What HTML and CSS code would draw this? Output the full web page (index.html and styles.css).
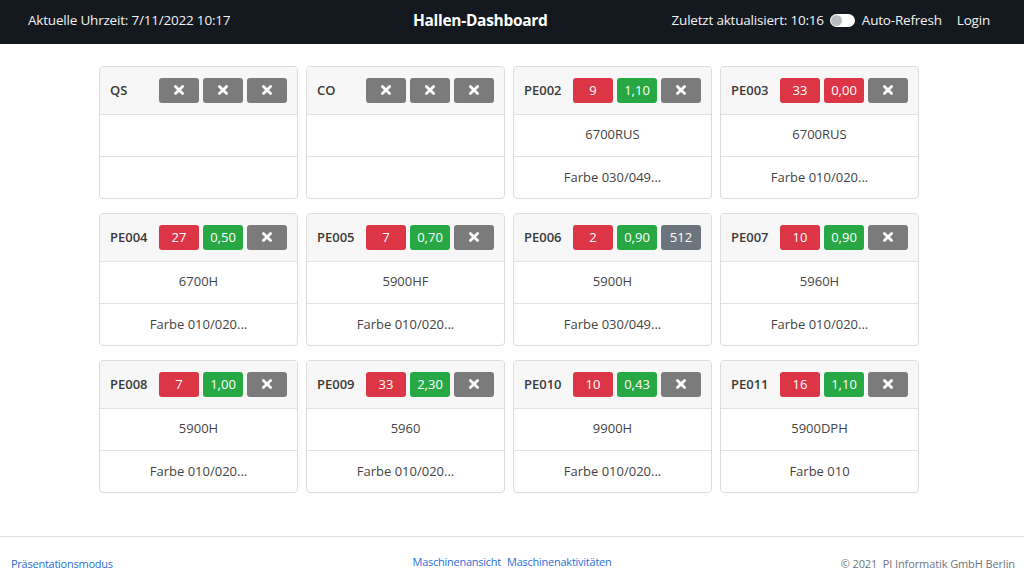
FILE: index.html
```html
<!DOCTYPE html>
<html lang="de">
<head>
<meta charset="utf-8">
<title>Hallen-Dashboard</title>
<link rel="stylesheet" href="styles.css">
</head>
<body>
<header class="navbar">
  <div class="nav-left">Aktuelle Uhrzeit: 7/11/2022 10:17</div>
  <div class="nav-title">Hallen-Dashboard</div>
  <div class="nav-right">
    <span>Zuletzt aktualisiert: 10:16</span>
    <span class="toggle"><span class="knob"></span></span>
    <span>Auto-Refresh</span>
    <span class="login">Login</span>
  </div>
</header>

<main class="main">
  <div class="grid">
    <div class="card">
      <div class="card-head"><span class="name">QS</span><span class="badges"><span class="b gray"><svg class="x" viewBox="0 0 10 10"><path d="M2 2L8 8M8 2L2 8"/></svg></span><span class="b gray"><svg class="x" viewBox="0 0 10 10"><path d="M2 2L8 8M8 2L2 8"/></svg></span><span class="b gray"><svg class="x" viewBox="0 0 10 10"><path d="M2 2L8 8M8 2L2 8"/></svg></span></span></div>
      <div class="row"></div>
      <div class="row last"></div>
    </div>
    <div class="card">
      <div class="card-head"><span class="name">CO</span><span class="badges"><span class="b gray"><svg class="x" viewBox="0 0 10 10"><path d="M2 2L8 8M8 2L2 8"/></svg></span><span class="b gray"><svg class="x" viewBox="0 0 10 10"><path d="M2 2L8 8M8 2L2 8"/></svg></span><span class="b gray"><svg class="x" viewBox="0 0 10 10"><path d="M2 2L8 8M8 2L2 8"/></svg></span></span></div>
      <div class="row"></div>
      <div class="row last"></div>
    </div>
    <div class="card">
      <div class="card-head"><span class="name">PE002</span><span class="badges"><span class="b red">9</span><span class="b green">1,10</span><span class="b gray"><svg class="x" viewBox="0 0 10 10"><path d="M2 2L8 8M8 2L2 8"/></svg></span></span></div>
      <div class="row">6700RUS</div>
      <div class="row last">Farbe 030/049...</div>
    </div>
    <div class="card">
      <div class="card-head"><span class="name">PE003</span><span class="badges"><span class="b red">33</span><span class="b red">0,00</span><span class="b gray"><svg class="x" viewBox="0 0 10 10"><path d="M2 2L8 8M8 2L2 8"/></svg></span></span></div>
      <div class="row">6700RUS</div>
      <div class="row last">Farbe 010/020...</div>
    </div>

    <div class="card">
      <div class="card-head"><span class="name">PE004</span><span class="badges"><span class="b red">27</span><span class="b green">0,50</span><span class="b gray"><svg class="x" viewBox="0 0 10 10"><path d="M2 2L8 8M8 2L2 8"/></svg></span></span></div>
      <div class="row">6700H</div>
      <div class="row last">Farbe 010/020...</div>
    </div>
    <div class="card">
      <div class="card-head"><span class="name">PE005</span><span class="badges"><span class="b red">7</span><span class="b green">0,70</span><span class="b gray"><svg class="x" viewBox="0 0 10 10"><path d="M2 2L8 8M8 2L2 8"/></svg></span></span></div>
      <div class="row">5900HF</div>
      <div class="row last">Farbe 010/020...</div>
    </div>
    <div class="card">
      <div class="card-head"><span class="name">PE006</span><span class="badges"><span class="b red">2</span><span class="b green">0,90</span><span class="b slate">512</span></span></div>
      <div class="row">5900H</div>
      <div class="row last">Farbe 030/049...</div>
    </div>
    <div class="card">
      <div class="card-head"><span class="name">PE007</span><span class="badges"><span class="b red">10</span><span class="b green">0,90</span><span class="b gray"><svg class="x" viewBox="0 0 10 10"><path d="M2 2L8 8M8 2L2 8"/></svg></span></span></div>
      <div class="row">5960H</div>
      <div class="row last">Farbe 010/020...</div>
    </div>

    <div class="card">
      <div class="card-head"><span class="name">PE008</span><span class="badges"><span class="b red">7</span><span class="b green">1,00</span><span class="b gray"><svg class="x" viewBox="0 0 10 10"><path d="M2 2L8 8M8 2L2 8"/></svg></span></span></div>
      <div class="row">5900H</div>
      <div class="row last">Farbe 010/020...</div>
    </div>
    <div class="card">
      <div class="card-head"><span class="name">PE009</span><span class="badges"><span class="b red">33</span><span class="b green">2,30</span><span class="b gray"><svg class="x" viewBox="0 0 10 10"><path d="M2 2L8 8M8 2L2 8"/></svg></span></span></div>
      <div class="row">5960</div>
      <div class="row last">Farbe 010/020...</div>
    </div>
    <div class="card">
      <div class="card-head"><span class="name">PE010</span><span class="badges"><span class="b red">10</span><span class="b green">0,43</span><span class="b gray"><svg class="x" viewBox="0 0 10 10"><path d="M2 2L8 8M8 2L2 8"/></svg></span></span></div>
      <div class="row">9900H</div>
      <div class="row last">Farbe 010/020...</div>
    </div>
    <div class="card">
      <div class="card-head"><span class="name">PE011</span><span class="badges"><span class="b red">16</span><span class="b green">1,10</span><span class="b gray"><svg class="x" viewBox="0 0 10 10"><path d="M2 2L8 8M8 2L2 8"/></svg></span></span></div>
      <div class="row">5900DPH</div>
      <div class="row last">Farbe 010</div>
    </div>
  </div>
</main>

<footer class="footer">
  <a class="flink left" href="#">Präsentationsmodus</a>
  <div class="center"><a class="flink" href="#">Maschinenansicht</a><a class="flink" href="#">Maschinenaktivitäten</a></div>
  <div class="copy">© 2021&nbsp; PI Informatik GmbH Berlin</div>
</footer>
</body>
</html>
```

FILE: styles.css
```css
* { box-sizing: border-box; }
html, body { margin: 0; padding: 0; }
body {
  font-family: "Open Sans", "Noto Sans", sans-serif;
  font-size: 13px;
  color: #333;
  background: #fff;
  height: 579px;
  display: flex;
  flex-direction: column;
}
.navbar {
  height: 44px;
  background: #141920;
  color: #f2f2f2;
  display: flex;
  align-items: center;
  padding: 0 34px 4px 28px;
  flex: none;
}
.nav-left {
  width: 385px;
  font-size: 13.5px;
  letter-spacing: -0.2px;
}
.nav-title {
  font-weight: 700;
  font-size: 15.5px;
  color: #fff;
  letter-spacing: -0.3px;
}
.nav-right {
  margin-left: auto;
  display: flex;
  align-items: center;
  font-size: 13.5px;
  letter-spacing: -0.2px;
}
.toggle {
  width: 25px;
  height: 13px;
  border-radius: 7px;
  background: #fff;
  margin: 0 7px 0 6px;
  position: relative;
  display: inline-block;
}
.knob {
  position: absolute;
  left: 1px;
  top: 1px;
  width: 11px;
  height: 11px;
  border-radius: 50%;
  background: #b9bcc0;
}
.login { margin-left: 15px; }

.main {
  flex: 1;
  padding-top: 22px;
}
.grid {
  width: 820px;
  margin-left: 99px;
  display: grid;
  grid-template-columns: repeat(4, 199px);
  column-gap: 8px;
  row-gap: 14px;
}
.card {
  border: 1px solid #dcdcdc;
  border-radius: 4px;
  overflow: hidden;
  background: #fff;
}
.card-head {
  height: 48px;
  background: #f7f7f7;
  border-bottom: 1px solid #e2e2e2;
  display: flex;
  align-items: center;
  justify-content: space-between;
  padding: 0 10px 1px 10px;
}
.name {
  font-weight: 600;
  color: #3a3a3a;
  font-size: 13px;
}
.badges { display: flex; gap: 4px; }
.b {
  width: 40px;
  height: 25px;
  border-radius: 3px;
  color: #fff;
  display: flex;
  align-items: center;
  justify-content: center;
  font-size: 13px;
}
.red { background: #dc3545; }
.green { background: #28a745; }
.gray { background: #7b7b7b; }
.slate { background: #6c757d; }
.x { width: 12px; height: 12px; }
.x path { stroke: #fff; stroke-width: 2.3; stroke-linecap: round; fill: none; }
.row {
  height: 42px;
  border-bottom: 1px solid #e2e2e2;
  display: flex;
  align-items: center;
  justify-content: center;
  color: #444;
  padding-bottom: 3px;
}
.row.last { border-bottom: none; height: 41px; padding-bottom: 1px; }

.footer {
  height: 43px;
  flex: none;
  border-top: 1px solid #dee2e6;
  display: flex;
  align-items: center;
  padding: 11px 9px 0 11px;
  font-size: 11px;
  position: relative;
}
.flink {
  color: #2a6fdb;
  text-decoration: none;
  letter-spacing: -0.25px;
}
.center {
  position: absolute;
  left: 0;
  right: 0;
  bottom: 10px;
  display: flex;
  justify-content: center;
  gap: 6px;
  pointer-events: none;
}
.copy {
  margin-left: auto;
  color: #6c757d;
  letter-spacing: -0.1px;
}
```
